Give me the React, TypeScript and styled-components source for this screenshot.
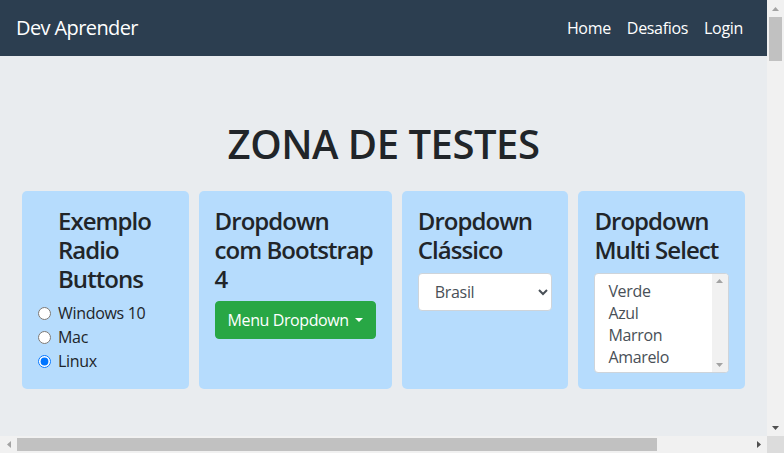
import React from "react";
import styled, { createGlobalStyle } from "styled-components";

const FONT = `"Open Sans", "Noto Sans", "Liberation Sans", sans-serif`;

const GlobalStyle = createGlobalStyle`
  html, body {
    margin: 0;
    padding: 0;
    background: #e9ecef;
  }
  body {
    font-family: ${FONT};
    font-size: 16px;
    line-height: 1.5;
    color: #212529;
    letter-spacing: -0.02em;
  }
  * { box-sizing: border-box; }
`;

/* ---------- window frame with classic scrollbars ---------- */

const Frame = styled.div`
  display: grid;
  grid-template-columns: 767px 17px;
  grid-template-rows: 436px 17px;
  width: 784px;
  height: 453px;
  overflow: hidden;
`;

const Viewport = styled.div`
  overflow: hidden;
  background: #e9ecef;
`;

const VBar = styled.div`
  display: flex;
  flex-direction: column;
  background: #f1f1f1;
`;

const HBar = styled.div`
  display: flex;
  align-items: center;
  background: #f1f1f1;
`;

const Corner = styled.div`
  background: #dcdcdc;
`;

const ArrowCell = styled.div`
  flex: 0 0 17px;
  display: flex;
  align-items: center;
  justify-content: center;
  height: 17px;
  width: 17px;
`;

const VThumbArea = styled.div`
  flex: 1;
  display: flex;
  justify-content: center;
`;

const VThumb = styled.div`
  width: 13px;
  height: 44px;
  background: #c1c1c1;
`;

const HThumbArea = styled.div`
  flex: 1;
  display: flex;
  align-items: center;
  height: 17px;
`;

const HThumb = styled.div`
  width: 640px;
  height: 13px;
  background: #c1c1c1;
`;

type Dir = "up" | "down" | "left" | "right";
const TRI: Record<Dir, string> = {
  up: "0,4 3.5,0 7,4",
  down: "0,0 7,0 3.5,4",
  left: "4,0 4,7 0,3.5",
  right: "0,0 0,7 4,3.5",
};

function Tri({ dir, color }: { dir: Dir; color: string }) {
  const horiz = dir === "left" || dir === "right";
  return (
    <svg width={horiz ? 4 : 7} height={horiz ? 7 : 4} viewBox={horiz ? "0 0 4 7" : "0 0 7 4"}>
      <polygon points={TRI[dir]} fill={color} />
    </svg>
  );
}

/* ---------- page ---------- */

const NavBar = styled.nav`
  display: flex;
  align-items: center;
  justify-content: space-between;
  height: 56px;
  padding: 8px 16px;
  background: #2c3e50;
`;

const Brand = styled.a`
  font-size: 20px;
  line-height: 30px;
  padding: 5px 0;
  color: #fff;
  text-decoration: none;
  letter-spacing: -0.03em;
`;

const NavLinks = styled.ul`
  display: flex;
  list-style: none;
  margin: 0;
  padding: 0;
`;

const NavLink = styled.a`
  display: block;
  padding: 8px;
  color: #fff;
  text-decoration: none;
  font-size: 16px;
  line-height: 24px;
`;

const Main = styled.main`
  padding-top: 64px;
`;

const Title = styled.h1`
  margin: 0 0 23px;
  text-align: center;
  font-size: 40px;
  font-weight: 600;
  line-height: 1.2;
  letter-spacing: -0.012em;
`;

const CardRow = styled.div`
  display: flex;
  gap: 10px;
  padding: 0 22px;
`;

const Card = styled.section`
  flex: 1 1 0;
  padding: 16px;
  background: #b6dcfd;
  border-radius: 5px;
`;

const CardTitle = styled.h4<{ $indent?: boolean }>`
  margin: 0 0 8px;
  padding-left: ${(p) => (p.$indent ? "20px" : "0")};
  font-size: 24px;
  font-weight: 600;
  line-height: 1.2;
  letter-spacing: -0.04em;
`;

const RadioLabel = styled.label`
  display: flex;
  align-items: center;
  gap: 7px;
  line-height: 24px;
  font-size: 16px;

  input {
    width: 13px;
    height: 13px;
    margin: 0;
  }
`;

const DropButton = styled.button`
  display: inline-flex;
  align-items: center;
  white-space: nowrap;
  padding: 6px 12px;
  font-family: ${FONT};
  font-size: 16px;
  line-height: 24px;
  letter-spacing: -0.025em;
  color: #fff;
  background: #28a745;
  border: 1px solid #28a745;
  border-radius: 4px;

  &::after {
    content: "";
    display: inline-block;
    margin-left: 6px;
    border-top: 4px solid;
    border-right: 4px solid transparent;
    border-left: 4px solid transparent;
  }
`;

const Select = styled.select`
  display: block;
  width: 100%;
  height: 38px;
  padding: 6px 12px;
  font-family: ${FONT};
  font-size: 16px;
  line-height: 24px;
  letter-spacing: -0.02em;
  color: #495057;
  background: #fff;
  border: 1px solid #ced4da;
  border-radius: 4px;
`;

const ListBox = styled.div`
  display: flex;
  height: 100px;
  background: #fff;
  border: 1px solid #ced4da;
  border-radius: 4px;
  overflow: hidden;
`;

const ListOptions = styled.ul`
  flex: 1;
  list-style: none;
  margin: 0;
  padding: 6px 0 6px 11px;
`;

const ListOption = styled.li`
  padding: 0 2px;
  height: 22px;
  line-height: 22px;
  color: #495057;
`;

const ListScroll = styled.div`
  display: flex;
  flex-direction: column;
  justify-content: space-between;
  width: 16px;
  background: #f1f1f1;
`;

const ListArrow = styled.div`
  display: flex;
  align-items: center;
  justify-content: center;
  height: 14px;
`;

const colors = ["Verde", "Azul", "Marron", "Amarelo"];

export default function App() {
  return (
    <>
      <GlobalStyle />
      <Frame>
        <Viewport>
          <NavBar>
            <Brand href="#">Dev Aprender</Brand>
            <NavLinks>
              <li><NavLink href="#">Home</NavLink></li>
              <li><NavLink href="#">Desafios</NavLink></li>
              <li><NavLink href="#">Login</NavLink></li>
            </NavLinks>
          </NavBar>
          <Main>
            <Title>ZONA DE TESTES</Title>
            <CardRow>
              <Card>
                <CardTitle $indent>Exemplo Radio Buttons</CardTitle>
                <RadioLabel><input type="radio" name="so" />Windows 10</RadioLabel>
                <RadioLabel><input type="radio" name="so" />Mac</RadioLabel>
                <RadioLabel><input type="radio" name="so" defaultChecked />Linux</RadioLabel>
              </Card>
              <Card>
                <CardTitle>Dropdown com Bootstrap 4</CardTitle>
                <DropButton type="button">Menu Dropdown</DropButton>
              </Card>
              <Card>
                <CardTitle>Dropdown Clássico</CardTitle>
                <Select defaultValue="Brasil">
                  <option>Brasil</option>
                  <option>Argentina</option>
                  <option>Portugal</option>
                </Select>
              </Card>
              <Card>
                <CardTitle>Dropdown Multi Select</CardTitle>
                <ListBox role="listbox" aria-multiselectable="true">
                  <ListOptions>
                    {colors.map((c) => (
                      <ListOption key={c} role="option">{c}</ListOption>
                    ))}
                  </ListOptions>
                  <ListScroll>
                    <ListArrow><Tri dir="up" color="#a3a3a3" /></ListArrow>
                    <ListArrow><Tri dir="down" color="#a3a3a3" /></ListArrow>
                  </ListScroll>
                </ListBox>
              </Card>
            </CardRow>
          </Main>
        </Viewport>
        <VBar>
          <ArrowCell><Tri dir="up" color="#a3a3a3" /></ArrowCell>
          <VThumbArea><VThumb /></VThumbArea>
          <ArrowCell><Tri dir="down" color="#505050" /></ArrowCell>
        </VBar>
        <HBar>
          <ArrowCell><Tri dir="left" color="#a3a3a3" /></ArrowCell>
          <HThumbArea><HThumb /></HThumbArea>
          <ArrowCell><Tri dir="right" color="#505050" /></ArrowCell>
        </HBar>
        <Corner />
      </Frame>
    </>
  );
}
